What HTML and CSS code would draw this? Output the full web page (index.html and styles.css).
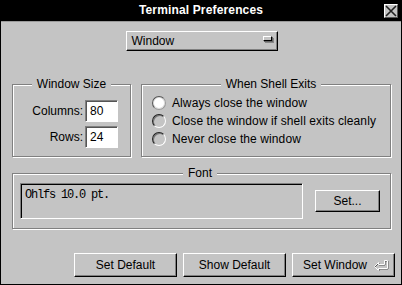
FILE: index.html
```html
<!DOCTYPE html>
<html lang="en">
<head>
    <meta charset="UTF-8">
    <title>Terminal Preferences</title>
    <link rel="stylesheet" href="styles.css">
</head>
<body>
    <div class="window">
        <div class="titlebar">
            Terminal Preferences
            <span class="close-box">
                <svg width="12" height="12" viewBox="0 0 12 12"><path d="M1 1 L11 11 M11 1 L1 11" stroke="#222" stroke-width="1.6"/></svg>
            </span>
        </div>

        <div class="content">
            <div class="popup-row">
                <button class="popup">Window<span class="popup-mark"></span></button>
            </div>

            <div class="groups">
                <fieldset class="group size-group">
                    <legend>Window Size</legend>
                    <div class="field-row"><label>Columns:</label><span class="input">80</span></div>
                    <div class="field-row"><label>Rows:</label><span class="input">24</span></div>
                </fieldset>

                <fieldset class="group shell-group">
                    <legend>When Shell Exits</legend>
                    <div class="radio-row"><span class="radio on"></span>Always close the window</div>
                    <div class="radio-row"><span class="radio"></span>Close the window if shell exits cleanly</div>
                    <div class="radio-row"><span class="radio"></span>Never close the window</div>
                </fieldset>
            </div>

            <fieldset class="group font-group">
                <legend>Font</legend>
                <div class="font-box">Ohlfs 10.0 pt.</div>
                <button class="button set-button">Set...</button>
            </fieldset>

            <div class="actions">
                <button class="button">Set Default</button>
                <button class="button">Show Default</button>
                <button class="button default-button">Set Window
                    <svg class="return-mark" width="18" height="13" viewBox="0 0 18 13">
                        <path d="M2.5 7.5 L6.5 3.5 L6.5 5.5 L12.5 5.5 L12.5 1.5 L15.5 1.5 L15.5 9.5 L6.5 9.5 L6.5 11.5 Z" fill="none" stroke="#555" stroke-width="1" transform="translate(0.5 0.5)"/>
                        <path d="M2.5 7.5 L6.5 3.5 L6.5 5.5 L12.5 5.5 L12.5 1.5 L15.5 1.5 L15.5 9.5 L6.5 9.5 L6.5 11.5 Z" fill="none" stroke="#fff" stroke-width="1"/>
                    </svg>
                </button>
            </div>
        </div>
    </div>
</body>
</html>
```

FILE: styles.css
```css
body {
    margin: 0;
    padding: 0;
    background: #c4c4c4;
    font-family: 'Liberation Sans', Arial, sans-serif;
    font-size: 12px;
    color: #000;
}

.window {
    width: 402px;
    height: 285px;
    box-sizing: border-box;
    border: 1px solid #000;
    border-top: none;
    background: #c4c4c4;
    overflow: hidden;
}

.titlebar {
    position: relative;
    height: 21px;
    line-height: 21px;
    background: #000;
    color: #fff;
    font-weight: bold;
    font-size: 12px;
    letter-spacing: 0.15px;
    text-align: center;
    border-bottom: 1px solid #9a9a9a;
    margin: 0 -1px;
}

.close-box {
    position: absolute;
    left: 384px;
    top: 4px;
    width: 14px;
    height: 14px;
    box-sizing: border-box;
    background: #c4c4c4;
    border: 1px solid;
    border-color: #fff #555 #555 #fff;
    display: flex;
    align-items: center;
    justify-content: center;
}

.content {
    padding: 0 6px 0 11px;
}

.popup-row {
    display: flex;
    justify-content: center;
    padding-right: 4px;
    margin-top: 9px;
}

.popup {
    position: relative;
    width: 152px;
    height: 20px;
    padding: 0 0 0 5px;
    text-align: left;
    font-family: inherit;
    font-size: 12px;
    color: #000;
    background: #c4c4c4;
    border: 1px solid;
    border-color: #fff #000 #000 #fff;
    box-shadow: inset -1px -1px 0 #808080;
    display: flex;
    align-items: center;
}

.popup-mark {
    position: absolute;
    left: 136px;
    top: 4px;
    width: 9px;
    height: 5px;
    box-sizing: border-box;
    background: #c4c4c4;
    border: 1px solid;
    border-color: #fff #000 #000 #fff;
    box-shadow: 1px 1px 0 #666, 2px 2px 0 #888;
}

.groups {
    display: flex;
    gap: 10px;
    margin-top: 26px;
}

.group {
    margin: 0;
    padding: 0;
    min-inline-size: 0;
    border: 1px solid #808080;
    box-shadow: 1px 1px 0 #fff, inset 1px 1px 0 #fff;
}

.group legend {
    margin: 0 auto;
    padding: 0 5px;
    line-height: 14px;
    background: #c4c4c4;
}

.size-group {
    width: 119px;
    box-sizing: border-box;
    padding: 9px 0 8px;
}

.field-row {
    display: flex;
    justify-content: flex-end;
    align-items: center;
    gap: 2px;
    padding-right: 12px;
    height: 22px;
}

.field-row + .field-row {
    margin-top: 4px;
}

.input {
    width: 33px;
    height: 22px;
    box-sizing: border-box;
    padding: 3px 0 0 4px;
    background: #fff;
    border: 1px solid;
    border-color: #808080 #fff #fff #808080;
    box-shadow: inset 1px 1px 0 #555;
}

.shell-group {
    width: 250px;
    box-sizing: border-box;
    padding: 3px 0 8px 10px;
}

.radio-row {
    display: flex;
    align-items: center;
    gap: 6px;
    height: 18px;
    letter-spacing: 0.1px;
}

.radio {
    width: 14px;
    height: 14px;
    box-sizing: border-box;
    border-radius: 50%;
    border: 1px solid;
    border-color: #222 #fff #fff #222;
    box-shadow: inset 1px 1px 0 #777;
}

.radio.on {
    background: #fff;
    border-color: #555 #999 #999 #555;
    box-shadow: inset 0 0 0 1px #ddd;
}

.font-group {
    width: 379px;
    box-sizing: border-box;
    margin-top: 9px;
    padding: 3px 10px 9px 7px;
    display: flex;
    align-items: center;
    justify-content: space-between;
}

.font-box {
    width: 283px;
    height: 36px;
    box-sizing: border-box;
    padding: 3px 3px 3px 4px;
    font-family: 'Liberation Mono', 'DejaVu Sans Mono', monospace;
    font-size: 12px;
    letter-spacing: -1.2px;
    line-height: 16px;
    border: 1px solid;
    border-color: #808080 #fff #fff #808080;
    box-shadow: inset 1px 1px 0 #000;
}

.button {
    height: 24px;
    padding: 0;
    font-family: inherit;
    font-size: 12px;
    color: #000;
    background: #c4c4c4;
    border: 1px solid;
    border-color: #fff #000 #000 #fff;
    box-shadow: inset -1px -1px 0 #808080;
}

.set-button {
    width: 65px;
    height: 22px;
}

.actions {
    display: flex;
    justify-content: flex-end;
    gap: 6px;
    margin-top: 24px;
}

.actions .button {
    width: 103px;
}

.default-button {
    display: flex;
    align-items: center;
    justify-content: space-between;
    padding: 0 4px 0 10px;
}

.return-mark {
    display: block;
}
```
